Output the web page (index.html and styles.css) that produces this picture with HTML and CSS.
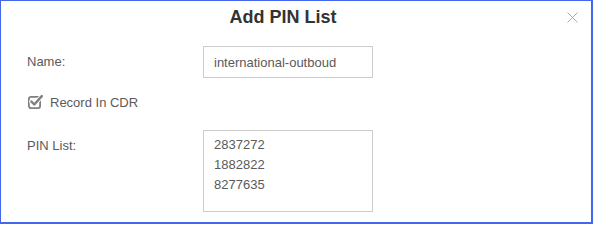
FILE: index.html
```html
<!DOCTYPE html>
<html lang="en">
<head>
<meta charset="utf-8">
<title>Add PIN List</title>
<link rel="stylesheet" href="styles.css">
</head>
<body>
<div class="modal">
  <div class="modal-header">
    <h1 class="modal-title">Add PIN List</h1>
    <button class="close" type="button" aria-label="Close">
      <svg width="11" height="11" viewBox="0 0 11 11"><path d="M0.5 0.5 L10.5 10.5 M10.5 0.5 L0.5 10.5" stroke="#aaaaaa" stroke-width="1" fill="none"/></svg>
    </button>
  </div>
  <form class="form">
    <div class="row row-name">
      <label class="label" for="name">Name:</label>
      <input class="field input" id="name" type="text" value="international-outboud">
    </div>
    <div class="row-check">
      <svg class="check-icon" width="16" height="16" viewBox="0 0 16 16">
        <rect x="1.9" y="3.9" width="11.2" height="11.2" rx="2" ry="2" fill="none" stroke="#808080" stroke-width="1.8"/>
        <polyline points="4.4,8.6 7.3,11.5 14.8,3.1" fill="none" stroke="#ffffff" stroke-width="4.4" stroke-linecap="round" stroke-linejoin="round"/>
        <polyline points="4.4,8.6 7.3,11.5 14.8,3.1" fill="none" stroke="#808080" stroke-width="2.4" stroke-linecap="round" stroke-linejoin="round"/>
      </svg>
      <span class="check-label">Record In CDR</span>
    </div>
    <div class="row row-pins">
      <label class="label label-top" for="pins">PIN List:</label>
      <textarea class="field textarea" id="pins">2837272
1882822
8277635</textarea>
    </div>
  </form>
</div>
</body>
</html>
```

FILE: styles.css
```css
* {
  box-sizing: border-box;
}

html, body {
  margin: 0;
  padding: 0;
  background: #ffffff;
}

body {
  font-family: "Liberation Sans", Arial, Helvetica, sans-serif;
  color: #5a5a5a;
}

.modal {
  width: 593px;
  height: 224px;
  border-style: solid;
  border-color: #4466ee;
  border-width: 1px 2px 2px 1px;
  background: #ffffff;
}

.modal-header {
  display: flex;
  align-items: center;
  height: 32px;
}

.modal-title {
  flex: 1;
  margin: 0;
  text-align: center;
  font-size: 18px;
  font-weight: bold;
  line-height: 32px;
  color: #333333;
}

.close {
  width: 26px;
  height: 32px;
  padding: 0 0 0 2px;
  margin: 0;
  border: 0;
  background: transparent;
  display: flex;
  align-items: center;
  justify-content: flex-start;
}

.close svg {
  display: block;
}

.form {
  margin: 13px 0 0 26px;
}

.row {
  display: grid;
  grid-template-columns: 176px 170px;
}

.row-name {
  align-items: center;
}

.label {
  font-size: 13px;
  line-height: 20px;
  color: #5a5a5a;
}

.label-top {
  margin-top: 6px;
}

.field {
  width: 170px;
  border: 1px solid #cccccc;
  border-radius: 0;
  background: #ffffff;
  font-family: "Liberation Sans", Arial, Helvetica, sans-serif;
  font-size: 13px;
  color: #5a5a5a;
  outline: none;
  margin: 0;
}

.input {
  height: 32px;
  padding: 0 10px;
}

.row-check {
  display: flex;
  align-items: center;
  height: 18px;
  margin-top: 16px;
}

.check-icon {
  display: block;
  margin-bottom: 4px;
}

.check-label {
  margin-left: 7px;
  font-size: 13px;
  line-height: 18px;
  color: #5a5a5a;
}

.row-pins {
  margin-top: 18px;
}

.textarea {
  height: 82px;
  padding: 4px 10px;
  line-height: 20px;
  resize: none;
  overflow: hidden;
}
```
